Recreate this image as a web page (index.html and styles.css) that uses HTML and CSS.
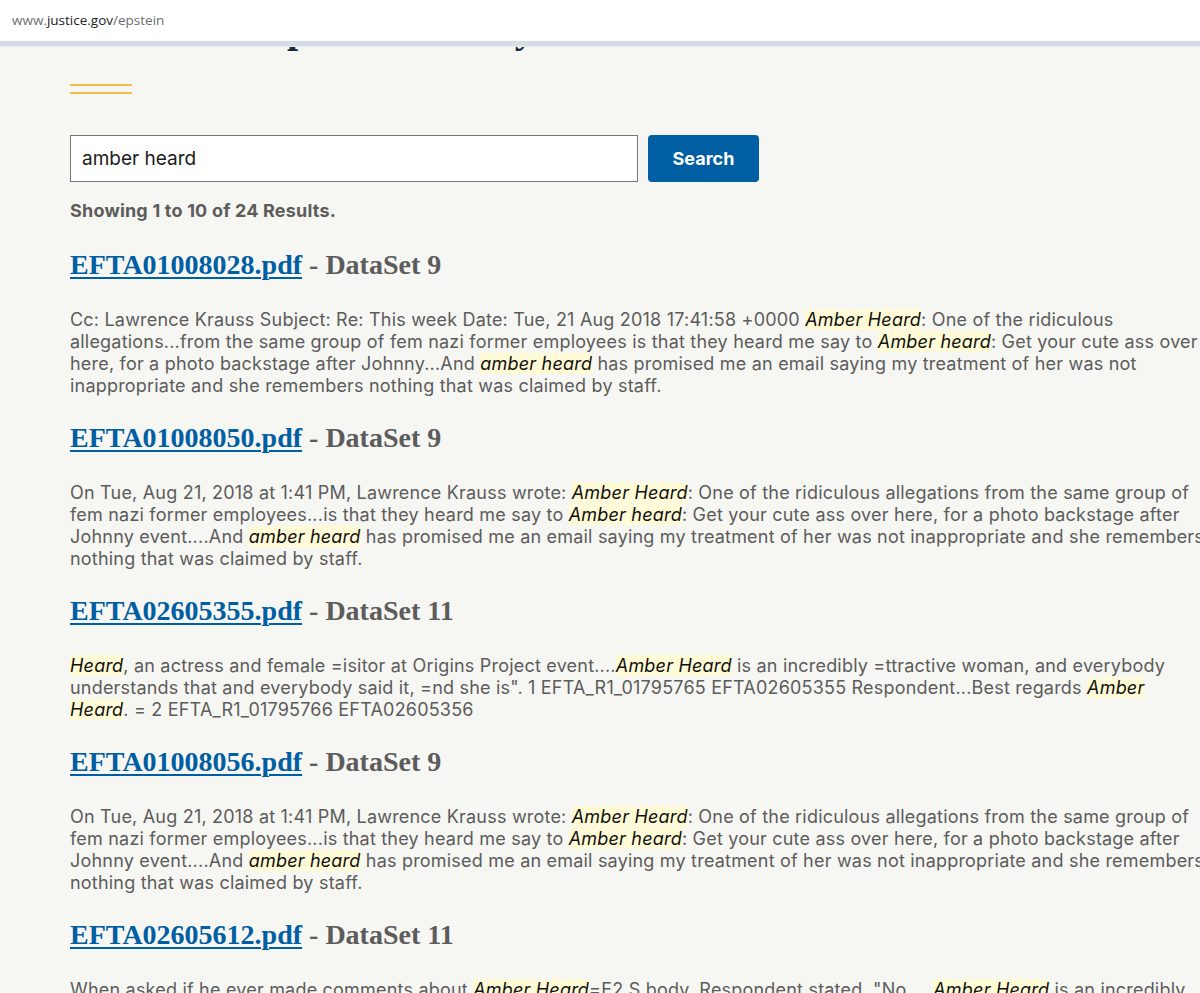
FILE: index.html
```html
<!DOCTYPE html>
<html lang="en">
<head>
  <meta charset="utf-8" />
  <title>Epstein Library | Department of Justice</title>
  <link rel="stylesheet" href="styles.css">
</head>
<body>
  <div class="urlbar">
    <span class="url-dim">www.</span><span class="url-host">justice.gov</span><span class="url-dim">/epstein</span>
  </div>
  <div class="site-band"></div>
  <main class="page">
    <h1 class="page-title">Search the Epstein Library</h1>
    <div class="title-rule"></div>

    <form class="search-form" id="searchForm">
      <input type="text" class="search-input" name="q" value="amber heard" />
      <button type="submit" class="search-btn">Search</button>
    </form>

    <p class="result-count">Showing 1 to 10 of 24 Results.</p>

    <div class="results">
      <div class="result">
        <h3 class="result-title"><a href="#">EFTA01008028.pdf</a> - DataSet 9</h3>
        <p class="result-snippet">Cc: Lawrence Krauss Subject: Re: This week Date: Tue, 21 Aug 2018 17:41:58 +0000 <mark>Amber Heard</mark>: One of the ridiculous allegations...from the same group of fem nazi former employees is that they heard me say to <mark>Amber heard</mark>: Get your cute ass over here, for a photo backstage after Johnny...And <mark>amber heard</mark> has promised me an email saying my treatment of her was not inappropriate and she remembers nothing that was claimed by staff.</p>
      </div>
      <div class="result">
        <h3 class="result-title"><a href="#">EFTA01008050.pdf</a> - DataSet 9</h3>
        <p class="result-snippet">On Tue, Aug 21, 2018 at 1:41 PM, Lawrence Krauss wrote: <mark>Amber Heard</mark>: One of the ridiculous allegations from the same group of fem nazi former employees...is that they heard me say to <mark>Amber heard</mark>: Get your cute ass over here, for a photo backstage after Johnny event....And <mark>amber heard</mark> has promised me an email saying my treatment of her was not inappropriate and she remembers nothing that was claimed by staff.</p>
      </div>
      <div class="result">
        <h3 class="result-title"><a href="#">EFTA02605355.pdf</a> - DataSet 11</h3>
        <p class="result-snippet"><mark>Heard</mark>, an actress and female =isitor at Origins Project event....<mark>Amber Heard</mark> is an incredibly =ttractive woman, and everybody understands that and everybody said it, =nd she is". 1 EFTA_R1_01795765 EFTA02605355 Respondent...Best regards <mark>Amber Heard</mark>. = 2 EFTA_R1_01795766 EFTA02605356</p>
      </div>
      <div class="result">
        <h3 class="result-title"><a href="#">EFTA01008056.pdf</a> - DataSet 9</h3>
        <p class="result-snippet">On Tue, Aug 21, 2018 at 1:41 PM, Lawrence Krauss wrote: <mark>Amber Heard</mark>: One of the ridiculous allegations from the same group of fem nazi former employees...is that they heard me say to <mark>Amber heard</mark>: Get your cute ass over here, for a photo backstage after Johnny event....And <mark>amber heard</mark> has promised me an email saying my treatment of her was not inappropriate and she remembers nothing that was claimed by staff.</p>
      </div>
      <div class="result">
        <h3 class="result-title"><a href="#">EFTA02605612.pdf</a> - DataSet 11</h3>
        <p class="result-snippet">When asked if he ever made comments about <mark>Amber Heard</mark>=E2 S body, Respondent stated, "No.... <mark>Amber Heard</mark> is an incredibly attractive woman, and everybody understands that.</p>
      </div>
    </div>
  </main>
</body>
</html>
```

FILE: styles.css
```css
html {
  overflow: hidden;
}
body {
  margin: 0;
  background: #f6f6f2;
  font-family: Inter, Roboto, "Liberation Sans", sans-serif;
  color: #5c5c5c;
}
.urlbar {
  height: 41px;
  background: #fff;
  padding-left: 12px;
  font-family: "Open Sans", "Noto Sans", sans-serif;
  font-size: 13.5px;
  line-height: 40px;
  box-sizing: border-box;
}
.url-dim {
  color: #6b6f74;
}
.url-host {
  color: #202124;
}
.site-band {
  height: 5px;
  background: #d5dde5;
  border-bottom: 1px solid #e6ecef;
}
.page {
  overflow: hidden;
  padding: 0 0 0 70px;
  width: 1136px;
}
.page-title {
  font-family: "Liberation Serif", serif;
  font-size: 40px;
  line-height: 48px;
  font-weight: 700;
  color: #1b2a3d;
  margin: -42px 0 0;
  white-space: nowrap;
}
.title-rule {
  width: 62px;
  height: 6px;
  border-top: 2px solid #f2c04a;
  border-bottom: 2px solid #f2c04a;
  margin-top: 31px;
}
.search-form {
  display: flex;
  gap: 10px;
  margin-top: 41px;
}
.search-input {
  width: 568px;
  height: 47px;
  box-sizing: border-box;
  border: 1px solid #767676;
  background: #fff;
  padding: 0 11px;
  font-family: Inter, Roboto, "Liberation Sans", sans-serif;
  font-size: 19px;
  color: #1b1b1b;
  border-radius: 0;
}
.search-btn {
  width: 111px;
  height: 47px;
  border: none;
  border-radius: 4px;
  background-color: #005ea2;
  color: #fff;
  font-family: Inter, Roboto, "Liberation Sans", sans-serif;
  font-size: 18px;
  font-weight: 700;
  cursor: pointer;
}
.result-count {
  font-size: 18px;
  font-weight: 700;
  line-height: 22px;
  letter-spacing: 0.2px;
  margin: 18px 0 26px;
}
.result-title {
  font-family: "Liberation Serif", serif;
  font-size: 28px;
  line-height: 34px;
  font-weight: 700;
  color: #5c5c5c;
  margin: 24px 0 27px;
}
.result-title a {
  color: #005ea2;
  text-decoration-thickness: 2px;
  text-underline-offset: 3px;
}
.result-snippet {
  font-size: 18px;
  line-height: 22px;
  letter-spacing: 0.2px;
  margin: 0;
}
.result-snippet mark {
  background: #fffbd6;
  color: #111;
  font-style: italic;
}
```
